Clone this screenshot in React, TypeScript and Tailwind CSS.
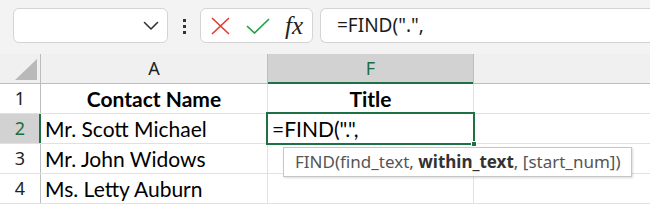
import React from 'react';

// Excel-like formula bar + grid snapshot, FIND() argument tooltip

const cellFont = { fontFamily: 'Lato, "Noto Sans", sans-serif' };

function Chevron() {
  return (
    <svg width="16" height="10" viewBox="0 0 16 10" fill="none">
      <path d="M1.5 1.5 L8 8 L14.5 1.5" stroke="#333" strokeWidth="1.6" strokeLinecap="round" strokeLinejoin="round" />
    </svg>
  );
}

function Cross() {
  return (
    <svg width="19" height="18" viewBox="0 0 19 18" fill="none">
      <path d="M1 1 L18 17 M18 1 L1 17" stroke="#e8372c" strokeWidth="1.6" />
    </svg>
  );
}

function Check() {
  return (
    <svg width="24" height="16" viewBox="0 0 24 16" fill="none">
      <path d="M1 8 L8.5 15 L23 1" stroke="#21a04a" strokeWidth="1.7" />
    </svg>
  );
}

export default function App() {
  const rows = [
    { n: '1', a: 'Contact Name', f: 'Title', head: true },
    { n: '2', a: 'Mr. Scott Michael', f: '=FIND(".",' },
    { n: '3', a: 'Mr. John Widows', f: '' },
    { n: '4', a: 'Ms. Letty Auburn', f: '' },
  ];

  return (
    <div className="relative w-[650px] h-[208px] overflow-hidden bg-white" style={{ fontFamily: '"Noto Sans", sans-serif' }}>
      {/* Formula bar strip */}
      <div className="flex h-[54px] items-start bg-[#f3f3f3] pt-[8px]">
        <div className="ml-[13px] flex h-[35px] w-[155px] items-center justify-end rounded-md border border-[#d4d4d4] bg-white pr-[8px]">
          <Chevron />
        </div>
        <div className="flex w-[32px] flex-col items-center gap-[3px] pt-[11px]">
          <span className="h-[3px] w-[3px] bg-[#333]" />
          <span className="h-[3px] w-[3px] bg-[#333]" />
          <span className="h-[3px] w-[3px] bg-[#333]" />
        </div>
        <div className="flex h-[35px] w-[113px] items-center rounded-md border border-[#d4d4d4] bg-white pl-[10px]">
          <Cross />
          <span className="ml-[16px]"><Check /></span>
          <span
            className="ml-[15px] text-[25px] italic leading-none text-[#222]"
            style={{ fontFamily: '"Liberation Serif", serif' }}
          >
            fx
          </span>
        </div>
        <div className="ml-[7px] flex h-[35px] flex-1 items-center rounded-l-md border-y border-l border-[#d4d4d4] bg-white pl-[16px] text-[19px] text-[#1b1b1b]">
          =FIND(".",
        </div>
      </div>

      {/* Column headers */}
      <div className="flex h-[30px] border-b border-[#bdbdbd] bg-[#f0f0f0]">
        <div className="relative w-[41px] border-r border-[#bdbdbd]">
          <svg className="absolute left-[15px] top-[5px]" width="22" height="21" viewBox="0 0 22 21">
            <polygon points="0,21 22,21 22,0" fill="#b9b9b9" />
          </svg>
        </div>
        <div className="flex w-[227px] items-center justify-center border-r border-[#bdbdbd] text-[18px] text-[#222]">A</div>
        <div className="relative flex w-[206px] items-center justify-center border-r border-[#bdbdbd] bg-[#d2d2d2] text-[18px] text-[#1d6b3f]">
          F
          <span className="absolute bottom-[-1px] left-0 right-0 h-[2px] bg-[#1e7145]" />
        </div>
        <div className="flex-1" />
      </div>

      {/* Rows */}
      {rows.map((r) => (
        <div key={r.n} className="flex h-[30px] border-b border-[#e1e1e1]">
          <div
            className={`relative flex w-[41px] items-center justify-center border-r border-[#bdbdbd] text-[18px] ${
              r.n === '2' ? 'bg-[#d2d2d2] text-[#1d6b3f]' : 'text-[#222]'
            }`}
          >
            {r.n}
            {r.n === '2' && <span className="absolute right-[-1px] top-0 bottom-0 w-[2px] bg-[#1e7145]" />}
          </div>
          <div
            className={`flex w-[227px] items-center border-r border-[#e1e1e1] text-[21px] text-black ${
              r.head ? 'justify-center font-bold' : 'pl-[4px]'
            }`}
            style={cellFont}
          >
            {r.a}
          </div>
          <div
            className={`flex w-[206px] items-center border-r border-[#e1e1e1] text-[21px] text-black ${
              r.head ? 'justify-center font-bold' : 'pl-[4px]'
            }`}
            style={cellFont}
          >
            {r.f}
          </div>
          <div className="flex-1" />
        </div>
      ))}

      {/* Active cell outline + fill handle */}
      <div className="absolute left-[266px] top-[112px] h-[33px] w-[209px] border-2 border-[#1e7145]" />
      <div className="absolute left-[471px] top-[141px] h-[6px] w-[6px] border border-white bg-[#1e7145]" />

      {/* Function argument tooltip */}
      <div className="absolute left-[283px] top-[147px] flex h-[30px] w-[349px] items-center border border-[#c6c6c6] bg-white pl-[11px] text-[17px] text-[#555] shadow-[1px_1px_2px_rgba(0,0,0,0.15)]">
        FIND(find_text,&nbsp;<span className="font-bold text-[#333]">within_text</span>, [start_num])
      </div>
    </div>
  );
}
